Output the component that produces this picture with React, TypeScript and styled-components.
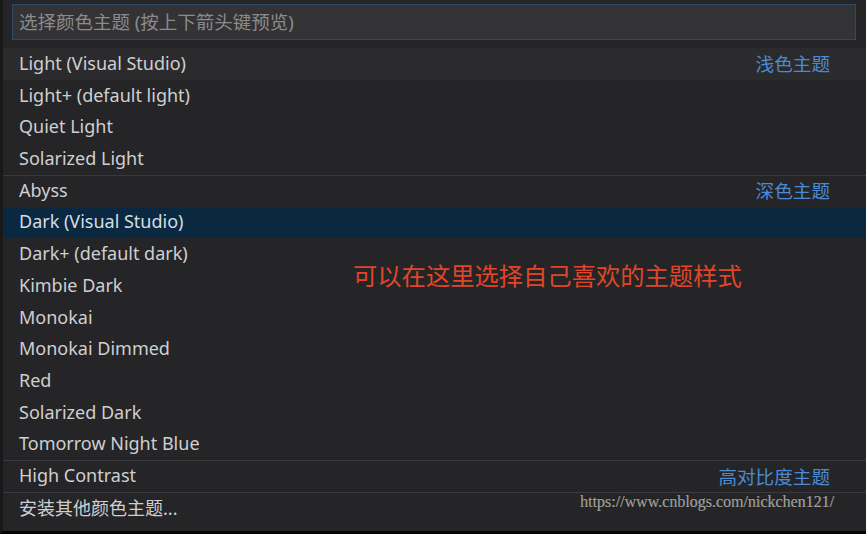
import React from "react";
import styled, { createGlobalStyle } from "styled-components";

type TThemeRow = {
  name: string;
  group?: string;
  active?: boolean;
  focused?: boolean;
  divider?: boolean;
};

type TRowProps = {
  $active?: boolean;
  $focused?: boolean;
  $divider?: boolean;
};

const rows: TThemeRow[] = [
  { name: "Light (Visual Studio)", group: "浅色主题", focused: true },
  { name: "Light+ (default light)" },
  { name: "Quiet Light" },
  { name: "Solarized Light" },
  { name: "Abyss", group: "深色主题", divider: true },
  { name: "Dark (Visual Studio)", active: true },
  { name: "Dark+ (default dark)" },
  { name: "Kimbie Dark" },
  { name: "Monokai" },
  { name: "Monokai Dimmed" },
  { name: "Red" },
  { name: "Solarized Dark" },
  { name: "Tomorrow Night Blue" },
  { name: "High Contrast", group: "高对比度主题", divider: true },
  { name: "安装其他颜色主题...", divider: true },
];

const GlobalStyle = createGlobalStyle`
  html, body {
    margin: 0;
    padding: 0;
    background: #000;
  }
  body {
    font-family: "Noto Sans", "Noto Sans CJK SC", sans-serif;
  }
`;

const Frame = styled.div`
  position: relative;
  width: 866px;
  height: 534px;
  box-sizing: border-box;
  border-left: 3px solid #19191a;
  border-bottom: 3px solid #050505;
  background: #252527;
  overflow: hidden;
`;

const InputWrap = styled.div`
  padding: 4px 10px 8px 9px;
`;

const SearchInput = styled.div`
  height: 36px;
  box-sizing: border-box;
  border: 1px solid #2e4a66;
  background: #333335;
  display: flex;
  align-items: center;
  padding: 0 0 2px 6px;
  font-size: 18.5px;
  color: #8b8b8d;
  font-family: "Noto Sans", "Noto Sans CJK SC", sans-serif;
`;

const List = styled.div`
  display: flex;
  flex-direction: column;
`;

const Row = styled.div<TRowProps>`
  height: 31.73px;
  box-sizing: border-box;
  display: flex;
  align-items: center;
  justify-content: space-between;
  padding: 0 36px 3px 16px;
  border-top: 1px solid ${(p) => (p.$divider ? "#3a3a3e" : "transparent")};
  background: ${(p) =>
    p.$active ? "#0a2941" : p.$focused ? "#2b2b2e" : "transparent"};
  color: ${(p) => (p.$active ? "#d4dde6" : "#cfcfd1")};
  font-size: 18px;
`;

const GroupLabel = styled.span`
  color: #4a8ad6;
  font-size: 18.6px;
  font-family: "Noto Sans CJK SC", sans-serif;
`;

const Note = styled.div`
  position: absolute;
  left: 350px;
  top: 257px;
  color: #e0452a;
  font-size: 24.3px;
  font-family: "Noto Sans CJK SC", sans-serif;
  white-space: nowrap;
`;

const Watermark = styled.div`
  position: absolute;
  right: 32px;
  top: 493px;
  color: #a0a0a0;
  font-size: 16px;
  font-family: "Liberation Serif", serif;
  text-shadow: 0 0 1px #000, 0.4px 0 0 #a0a0a0;
  white-space: nowrap;
`;

export default function App() {
  return (
    <>
      <GlobalStyle />
      <Frame>
        <InputWrap>
          <SearchInput>选择颜色主题 (按上下箭头键预览)</SearchInput>
        </InputWrap>
        <List>
          {rows.map((row, index) => (
            <Row
              key={index}
              $active={row.active}
              $focused={row.focused}
              $divider={row.divider}
            >
              <span>{row.name}</span>
              {row.group && <GroupLabel>{row.group}</GroupLabel>}
            </Row>
          ))}
        </List>
        <Note>可以在这里选择自己喜欢的主题样式</Note>
        <Watermark>https://www.cnblogs.com/nickchen121/</Watermark>
      </Frame>
    </>
  );
}
